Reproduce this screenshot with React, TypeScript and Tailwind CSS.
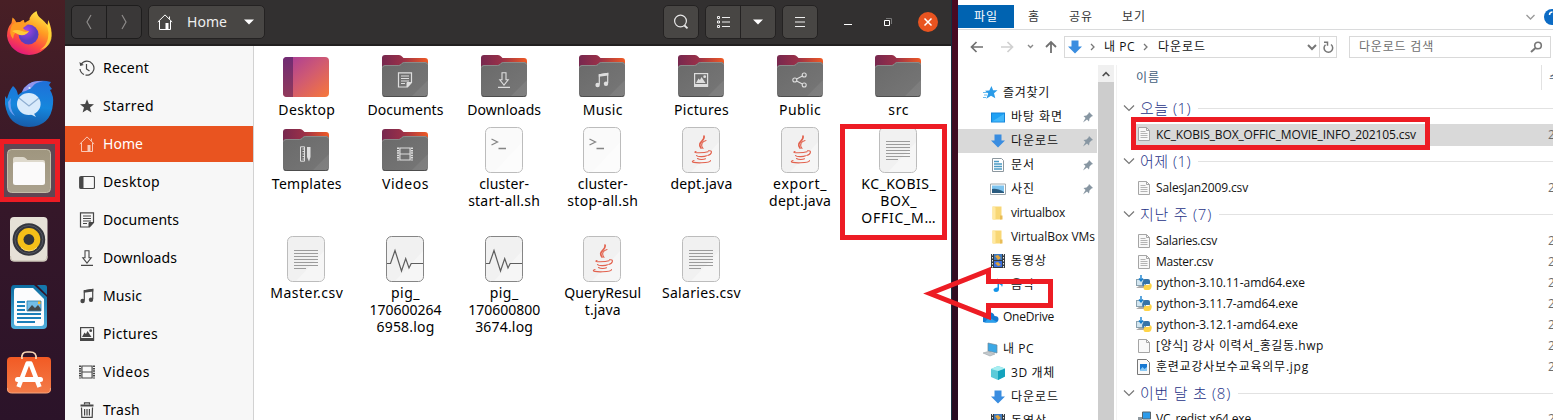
import { useLayoutEffect, useRef, useState } from "react";
import type { ReactNode } from "react";

/** A line of text whose tracking is adjusted so it spans `w` pixels. */
function Fit({ children, w, className = "" }: { children: string; w: number; className?: string }) {
  const ref = useRef<HTMLSpanElement>(null);
  const [spacing, setSpacing] = useState(0);
  useLayoutEffect(() => {
    if (ref.current) setSpacing((w - ref.current.getBoundingClientRect().width) / children.length);
  }, []);
  return (
    <span className={"block shrink-0 whitespace-pre " + className}>
      <span ref={ref} style={{ letterSpacing: spacing }}>{children}</span>
    </span>
  );
}

type GlyphName = "recent" | "star" | "home" | "desktop" | "doc" | "down" | "music" | "picture" | "video" | "trash" | "templates" | "share" | "none";

function Glyph({ name }: { name: GlyphName }) {
  const line = { fill: "none", stroke: "currentColor" };
  switch (name) {
    case "recent":
      return <g {...line} strokeWidth="1.2"><path d="M2.2 4.2A7 7 0 1 1 1 9" strokeDasharray="30 1.5" /><path d="M7.5 4v5l3 2" /><path d="M0.4 2l.8 4 3.6-1z" fill="currentColor" stroke="none" /></g>;
    case "star":
      return <path d="M8 1.2l1.9 4.900 5.100.2-4 3.200 1.400 4.900L8 11.700l-4.400 2.700L5 9.500 1 6.300l5.100-.2z" fill="currentColor" />;
    case "home":
      return <g {...line}><path d="M.8 8L8 .9 15.2 8M2.5 7v8.5h11V7M12.5 4.8V2.5" /><path d="M8.5 9h3v6h-3z" fill="currentColor" stroke="none" /></g>;
    case "desktop":
      return <g {...line}><rect x=".7" y="2.5" width="14.8" height="12" rx="1.3" strokeWidth="1.2" /><path d="M.8 3h3.7v11H.8z" fill="currentColor" stroke="none" /></g>;
    case "doc":
      return <g {...line}><path d="M1.5 .8h13v9.7l-4 4.5h-9z" strokeWidth="1.2" /><path d="M4 4h8M4 6.5h8M4 9h8M4 11.5h4" /><path d="M10 15v-4.5h4.5z" fill="currentColor" /></g>;
    case "down":
      return <g {...line} strokeWidth="1.1"><path d="M6 .8h4v7h2.2L8 13 3.8 7.800H6zM2 15.400h12" /></g>;
    case "music":
      return <g><path d="M5.300 12.500V2.800L13.700 1.500V11" {...line} strokeWidth="1.200" /><path d="M4.800 2.300L14.300.8v2.600L4.800 4.800z" fill="currentColor" /><circle cx="3.600" cy="13" r="2.200" fill="currentColor" /><circle cx="12" cy="11.700" r="2.200" fill="currentColor" /></g>;
    case "picture":
      return <g><rect x="1.600" y="1.600" width="13" height="12.500" {...line} strokeWidth="1.200" /><path d="M1 12h14v3H1zM3 11l2.500-4.500 1.500 1.500L8.500 5l4 6z" fill="currentColor" /><circle cx="11.700" cy="4.700" r="1.400" fill="currentColor" /></g>;
    case "video":
      return <g {...line}><path d="M1 1.500v13M15 1.500v13" strokeWidth="2" strokeDasharray="1.500 .9" /><path d="M2.900 2h10.200v12H2.900zM2.900 8h10.200" strokeWidth="1.200" /></g>;
    case "trash":
      return <g {...line}><path d="M2.500 5.500l.3 9.800h10.400l.3-9.800M5.600 7v6.500M8 7v6.500M10.400 7v6.500M5.500 2.500V.9h5v1.600" strokeWidth="1.200" /><path d="M1.500 2.500h13v2h-13z" fill="currentColor" stroke="none" /></g>;
    case "templates":
      return <g {...line}><path d="M2.500.8h4v14.400h-4zM4.500 3h2M4.500 5.500h2M4.500 8h2M4.500 10.500h2M4.500 13h2" /><path d="M9 1h3.500v10L11 15.500 9 11z" fill="currentColor" stroke="none" /></g>;
    case "share":
      return <g {...line} strokeWidth="1.100"><circle cx="2.800" cy="8" r="2" /><circle cx="12.200" cy="3" r="2" /><circle cx="12.200" cy="13" r="2" /><path d="M4.600 7l5.800-3M4.600 9l5.800 3" /></g>;
    default:
      return null;
  }
}

function SideIcon({ name }: { name: GlyphName }) {
  return <svg width="16" height="16" viewBox="0 0 16 16" className="shrink-0"><Glyph name={name} /></svg>;
}

function Folder({ name }: { name: GlyphName }) {
  return (
    <svg width="48" height="48" viewBox="0 0 48 48">
      <defs>
        <linearGradient id="folderBack" x1="0" y1="0" x2="1" y2="0">
          <stop offset="0" stopColor="#77284f" /><stop offset=".45" stopColor="#9a3048" /><stop offset="1" stopColor="#f05a24" />
        </linearGradient>
        <linearGradient id="folderFront" x1="0" y1="0" x2="1" y2="1">
          <stop offset="0" stopColor="#6a6a6a" /><stop offset="1" stopColor="#777" />
        </linearGradient>
      </defs>
      <path d="M1 6q0-3 3-3h14q2 0 3 1.500l1.500 1.500H44q3 0 3 3v20H1z" fill="url(#folderBack)" />
      <path d="M1 16q0-3 3-3h13.500q1.500 0 2.500-1l1.200-1.200Q22 10 23.500 10H44q3 0 3 3v28.500q0 3.500-3 3.500H4q-3 0-3-3.500z" fill="url(#folderFront)" />
      <path d="M1.500 15.500q.5-2 2.500-2h13.500q1.500 0 2.500-1l1.200-1.200q.8-.8 2.300-.8H44q2 0 2.500 2" fill="none" stroke="#929292" strokeWidth=".8" />
      <path d="M47 28v13.500q0 3.500-3 3.500H30z" fill="#fff" opacity=".07" />
      <path d="M2 43.500q1 1 2.500 1h39q1.500 0 2.500-1" fill="none" stroke="#4d4d4d" />
      <g transform="translate(16 20)" color="#dedede"><Glyph name={name} /></g>
    </svg>
  );
}

function DesktopTile() {
  return (
    <svg width="48" height="48" viewBox="0 0 48 48">
      <defs><linearGradient id="desk" x1="0" y1="0" x2="1" y2="1"><stop offset="0" stopColor="#a63a9b" /><stop offset=".5" stopColor="#d05a72" /><stop offset="1" stopColor="#f8783a" /></linearGradient>
        <linearGradient id="deskSide" x1="0" y1="0" x2="0" y2="1"><stop offset="0" stopColor="#702c73" /><stop offset="1" stopColor="#913a5c" /></linearGradient></defs>
      <rect x="1" y="5" width="46" height="40" rx="4" fill="url(#desk)" />
      <path d="M11 5H5q-4 0-4 4v32q0 4 4 4h6z" fill="url(#deskSide)" />
    </svg>
  );
}

type SheetKind = "text" | "shell" | "java" | "log";

function Sheet({ kind }: { kind: SheetKind }) {
  return (
    <svg width="48" height="48" viewBox="0 0 48 48">
      <rect x="5.500" y="1.500" width="37" height="45" rx="5" fill={kind === "shell" ? "#fafafa" : "#f1f1f1"} stroke={kind === "log" ? "#858585" : "#bcbcbc"} />
      <path d="M42 16v25.500q0 4.500-4.500 4.500H14z" fill="#fff" opacity=".35" />
      {kind === "text" && <path d="M12 15.500h24M12 18.500h24M12 21.500h24M12 24.500h24M12 27.500h24M12 30.500h24M12 33.500h12" stroke="#9c9c9c" />}
      {kind === "shell" && <g fill="none" stroke="#858585" strokeWidth="1.300"><path d="M11.500 13l6 3-6 3M18.500 22.500h7.500" /></g>}
      {kind === "log" && <path d="M6 28.500h3.500L14 15.500l6.500 20.500 4.200-12.500 3.300 9.500 2.200-4.500H42" fill="none" stroke="#5e5e5e" strokeWidth="1.200" />}
      {kind === "java" && (
        <g fill="none" stroke="#e2624e" strokeLinecap="round">
          <path d="M27 10c1.500 5-7.500 6-3 12" strokeWidth="1.700" />
          <path d="M29 14.500c-3.500 1-6 3.500-3 8" strokeWidth="1.100" />
          <path d="M19 25.500c-5 1.700 8 1.700 12 .2M19.500 29.500c1 1.500 8 1.500 10 .3M20.500 32.500c2 1.300 6 1.300 8 .3M31.500 24.800c4.500-.8 3.500 3.700-.8 4.700" strokeWidth="1.100" />
          <path d="M17 34.500c-5 1.700 2 2.500 7.500 2.300 6-.2 9-1 9-2.300" strokeWidth="1.100" />
        </g>
      )}
    </svg>
  );
}

type Tile = { icon: ReactNode; lines: [string, number][] };
const folder = (g: GlyphName, s: string, w: number): Tile => ({ icon: <Folder name={g} />, lines: [[s, w]] });
const sheet = (k: SheetKind, ...lines: [string, number][]): Tile => ({ icon: <Sheet kind={k} />, lines });

const rows: { h: string; tiles: Tile[] }[] = [
  { h: "h-[74px]", tiles: [
    { icon: <DesktopTile />, lines: [["Desktop", 57]] },
    folder("doc", "Documents", 76), folder("down", "Downloads", 74), folder("music", "Music", 40),
    folder("picture", "Pictures", 55), folder("share", "Public", 42), folder("none", "src", 21),
  ] },
  { h: "h-[109px]", tiles: [
    folder("templates", "Templates", 70), folder("video", "Videos", 47),
    sheet("shell", ["cluster-", 50], ["start-all.sh", 72]), sheet("shell", ["cluster-", 50], ["stop-all.sh", 71]),
    sheet("java", ["dept.java", 62]), sheet("java", ["export_", 54], ["dept.java", 62]),
    sheet("text", ["KC_KOBIS_", 75], ["BOX_", 37], ["OFFIC_M…", 75]),
  ] },
  { h: "h-[109px]", tiles: [
    sheet("text", ["Master.csv", 73]),
    sheet("log", ["pig_", 29], ["170600264", 72], ["6958.log", 58]),
    sheet("log", ["pig_", 29], ["170600800", 72], ["3674.log", 58]),
    sheet("java", ["QueryResul", 77], ["t.java", 36]),
    sheet("text", ["Salaries.csv", 79]),
  ] },
];

const places: [GlyphName, string, number][] = [
  ["recent", "Recent", 46], ["star", "Starred", 51], ["home", "Home", 40], ["desktop", "Desktop", 57],
  ["doc", "Documents", 76], ["down", "Downloads", 74], ["music", "Music", 39], ["picture", "Pictures", 55],
  ["video", "Videos", 47], ["trash", "Trash", 37],
];

function Dock() {
  return (
    <div className="flex h-[420px] w-[65px] shrink-0 flex-col bg-linear-to-b from-[#481f25] via-[#351729] to-[#2b1329] pt-[9px]">
      <svg width="65" height="50" viewBox="0 9 65 50">
        <defs>
          <linearGradient id="fox" x1=".8" y1="0" x2=".3" y2="1"><stop offset="0" stopColor="#fff04a" /><stop offset=".4" stopColor="#ff9b22" /><stop offset=".7" stopColor="#ff4a43" /><stop offset="1" stopColor="#df1580" /></linearGradient>
          <radialGradient id="globe" cx=".4" cy=".3"><stop offset="0" stopColor="#a845e8" /><stop offset="1" stopColor="#5b3ec0" /></radialGradient>
        </defs>
        <path d="M12.500 17.500q2 1 4 5l5 -.5 2-2 1 3q3-2 5-3 0-5 7-9 1 6 6 9l5 5 .8-5q4 9 3 16a22.300 21.500 0 0 1-44.300 0q0-8 4.500-13z" fill="url(#fox)" />
        <path d="M36 11q2 7 7 10 7 6 5 17-1 7-8 12 13-4 11.500-17l-3-12-1 5q-3-5-7-8-4-3-4.500-7z" fill="#ffe13b" opacity=".75" />
        <circle cx="28.500" cy="34.500" r="10" fill="url(#globe)" />
        <path d="M12 25q3-3 8-3 2-2 4-2 0 4 3 5l-4 3q2 3 6 3-2 4-8 4-4 0-5-3-3 3-3 7-5-6-1-14z" fill="#ff9b22" />
        <path d="M12 31q5-2 10 0 4 2 7 0-3 5-9 4-5-2-8-4z" fill="#ffcb3a" />
      </svg>
      <svg width="65" height="52" viewBox="0 77 65 52" className="mt-[18px]">
        <defs><linearGradient id="bird" x1=".5" y1="0" x2=".4" y2="1"><stop offset="0" stopColor="#1f70d8" /><stop offset=".55" stopColor="#1587dd" /><stop offset="1" stopColor="#185ba9" /></linearGradient></defs>
        <path d="M13 86q4 3 5 9l4-3q4-10 16-11 6-1 13 1l-2 3 3 4-2 1q4 6 3 14-2 22-24 23Q8 126 5 104V96l2 3q2-8 6-13z" fill="url(#bird)" />
        <path d="M22 92q4-10 16-11l8 1q-9-1-13 4-3 4-11 6z" fill="#9295eb" />
        <path d="M11 98q-2 11 4 18-7-4-7-14z" fill="#6f9ef0" />
        <circle cx="29.500" cy="88" r="1.100" fill="#d7f1ff" />
        <ellipse cx="28.800" cy="104" rx="11.800" ry="11" fill="#d8eafb" />
        <path d="M28 113l8 4-3-5z" fill="#d8eafb" />
        <path d="M19 98l10 8 10-8" fill="none" stroke="#8eaed1" strokeWidth="1.200" />
      </svg>
      <svg width="65" height="64" viewBox="0 138 65 64" className="mt-[9px]">
        <defs><linearGradient id="filesTile" x1="0" y1="0" x2="0" y2="1"><stop offset="0" stopColor="#9f967f" /><stop offset="1" stopColor="#aaa18d" /></linearGradient></defs>
        <rect x="0" y="139" width="60" height="63" rx="3" fill="#604653" />
        <rect x="7.500" y="149.500" width="43" height="43" rx="4" fill="url(#filesTile)" stroke="#c4bda9" />
        <path d="M13 159q0-2 2-2h8q2 0 3 1.500l1.500 1.500H43q2 0 2 2v10H13z" fill="#ded9cc" />
        <rect x="13" y="162" width="32" height="23" rx="2.500" fill="#fbfafa" />
      </svg>
      <svg width="65" height="50" viewBox="0 214 65 50" className="mt-[12px]">
        <rect x="10" y="217" width="37.500" height="44.500" rx="4" fill="#e6e1d7" />
        <path d="M10.500 256q0 5 4 5h28.500q4 0 4-5" fill="none" stroke="#c4bcad" />
        <circle cx="28.900" cy="239.500" r="16.300" fill="#34363d" /><circle cx="28.900" cy="239.500" r="14" fill="none" stroke="#555763" />
        <circle cx="28.900" cy="239.500" r="11.400" fill="#f4bf19" /><path d="M21 247.500a11 11 0 0 0 16 0" fill="none" stroke="#ffdf73" />
        <circle cx="28.900" cy="239.500" r="5.400" fill="#33363a" />
      </svg>
      <svg width="65" height="50" viewBox="0 281 65 50" className="mt-[17px]">
        <defs><linearGradient id="writer" x1="0" y1="0" x2="0" y2="1"><stop offset="0" stopColor="#0c6da1" /><stop offset="1" stopColor="#4eafdc" /></linearGradient></defs>
        <path d="M14 285h20l13 12v28q0 4-4 4H15q-4 0-4-4v-36q0-4 3-4z" fill="url(#writer)" />
        <path d="M37 285h8q2 0 2 2v8z" fill="#1577ac" />
        <path d="M16 288h17l11 11v24q0 3-3 3H17q-3 0-3-3v-32q0-3 2-3z" fill="#fbfcfd" />
        <path d="M17 302h8M17 306h8M17 310h8M17 314h24M17 318h24M17 322h18" stroke="#1a7fb9" strokeWidth="1.800" />
        <path d="M27 301h14v10H27z" fill="#72bce7" /><path d="M27 311l5-6 3 3 3-3 3 4v2z" fill="#46494c" /><path d="M38 301h3v3h-3z" fill="#fdbc35" /><path d="M27 301h14v10H27z" fill="none" stroke="#287eaf" strokeWidth=".8" />
      </svg>
      <svg width="65" height="50" viewBox="0 348 65 50" className="mt-[17px]">
        <defs><linearGradient id="store" x1="0" y1="0" x2="0" y2="1"><stop offset="0" stopColor="#f25a24" /><stop offset="1" stopColor="#f37b48" /></linearGradient></defs>
        <rect x="7" y="357" width="44" height="36" rx="4" fill="url(#store)" />
        <path d="M7.500 388q0 5 4 5h35q4 0 4-5" fill="none" stroke="#f7a47d" />
        <path d="M22 359q-1-7 5-7h3q7 0 6 7" fill="none" stroke="#fbd7b5" strokeWidth="1.700" />
        <path d="M18.500 387L27.500 363.500h3L39.500 387" fill="none" stroke="#fff" strokeWidth="4.500" strokeLinejoin="round" />
        <rect x="15" y="377" width="28" height="5" rx="2.500" fill="#fff" />
      </svg>
    </div>
  );
}

function UbuntuHeader() {
  return (
    <div className="flex h-[46px] w-full shrink-0 items-start border-b-2 border-[#222020] bg-[#323030] pt-[5px] text-white">
      <div className="ml-[6px] flex h-[34px] w-[71px] shrink-0 rounded-[5px] border border-[#1e1d1d] bg-[#3a3838]">
        <div className="flex flex-1 items-center justify-center border-r border-[#1e1d1d]"><svg width="6" height="16" viewBox="0 0 6 16"><path d="M5 1L1 8l4 7" fill="none" stroke="#8d8b8a" strokeWidth="1.200" /></svg></div>
        <div className="flex flex-1 items-center justify-center"><svg width="6" height="16" viewBox="0 0 6 16"><path d="M1 1l4 7-4 7" fill="none" stroke="#8d8b8a" strokeWidth="1.200" /></svg></div>
      </div>
      <div className="ml-[6px] flex h-[34px] w-[117px] shrink-0 items-center rounded-[5px] border border-[#242222] bg-[#484644] pl-[8px]">
        <SideIcon name="home" />
        <Fit w={40} className="ml-[14px] text-[14px] leading-[32px] text-[#eee]">Home</Fit>
        <svg width="10" height="6" viewBox="0 0 10 6" className="ml-[17px]"><path d="M0 .5h10L5 5.500z" fill="#fff" /></svg>
      </div>
      <div className="ml-[398px] flex h-[34px] w-[36px] shrink-0 items-center justify-center rounded-[5px] border border-[#242222] bg-[#484644]">
        <svg width="16" height="16" viewBox="0 0 16 16" fill="none" stroke="#e8e8e8" strokeWidth="1.200"><circle cx="7.500" cy="7" r="5.900" /><path d="M11.500 11.500l3 2.800" strokeWidth="1.800" /></svg>
      </div>
      <div className="ml-[6px] flex h-[34px] w-[71px] shrink-0 rounded-[5px] border border-[#242222] bg-[#484644]">
        <div className="flex w-[35px] items-center justify-center border-r border-[#242222]">
          <svg width="13" height="12" viewBox="0 0 13 12" fill="none" stroke="#eee"><path d="M5 1.500h8M5 6h8M5 10.500h8" /><path d="M.5.500h2v2h-2zM.5 5h2v2h-2zM.5 9.500h2v2h-2z" /></svg>
        </div>
        <div className="flex flex-1 items-center justify-center"><svg width="10" height="6" viewBox="0 0 10 6"><path d="M0 .5h10L5 5.500z" fill="#fff" /></svg></div>
      </div>
      <div className="ml-[6px] flex h-[34px] w-[36px] shrink-0 items-center justify-center rounded-[5px] border border-[#242222] bg-[#484644]">
        <svg width="10" height="10" viewBox="0 0 10 10"><path d="M0 .5h10M0 5h10M0 9.500h10" stroke="#eee" /></svg>
      </div>
      <svg width="100" height="34" viewBox="840 5 100 34" className="ml-[22px] shrink-0">
        <path d="M844 24.500h8" stroke="#fff" />
        <path d="M884.500 20.500h5v5h-5z" fill="none" stroke="#fff" /><path d="M886 18.500h5.500v5.500" fill="none" stroke="#777" />
        <circle cx="928" cy="22" r="10" fill="#e95420" /><path d="M924.500 18.500l7 7M931.500 18.500l-7 7" stroke="#fff" strokeWidth="1.500" />
      </svg>
    </div>
  );
}

function UbuntuWindow() {
  return (
    <div className="relative flex h-[420px] w-[886px] shrink-0 flex-col overflow-hidden bg-white font-['Noto_Sans',sans-serif] text-black">
      <UbuntuHeader />
      <div className="flex h-[374px]">
        <div className="flex h-full w-[189px] shrink-0 flex-col gap-[2px] overflow-hidden border-r border-[#d2d2d2] bg-[#f7f7f7] pt-[4px]">
          {places.map(([g, s, w]) => (
            <div key={s} className={"flex h-[36px] shrink-0 items-center pl-[14px] " + (s === "Home" ? "bg-[#e95420] text-white" : "")}>
              <span className={s === "Home" ? "text-[#f9c9b8]" : "text-[#474747]"}><SideIcon name={g} /></span>
              <Fit w={w} className="ml-[8px] text-[14px] leading-[36px]">{s}</Fit>
            </div>
          ))}
        </div>
        <div className="flex flex-col pt-[6px] pl-[3px]">
          {rows.map((r, i) => (
            <div key={i} className={"flex " + r.h}>
              {r.tiles.map((t, j) => (
                <div key={j} className="flex w-[98.67px] flex-col items-center">
                  <div className="mb-px h-[48px]">{t.icon}</div>
                  {t.lines.map(([s, w]) => <Fit key={s} w={w} className="pl-px text-[14px] leading-[17px]">{s}</Fit>)}
                </div>
              ))}
            </div>
          ))}
        </div>
      </div>
    </div>
  );
}

type WinIcon = "quick" | "screen" | "down" | "docs" | "photos" | "folder" | "film" | "note" | "cloud" | "pc" | "cube" | "text" | "python" | "blank" | "jpg" | "setup";

function Win({ name }: { name: WinIcon }) {
  const art: Record<WinIcon, ReactNode> = {
    quick: <g><path d="M8.500 1l1.600 4.200 4.400.1-3.500 3 1.300 5L8 10.800l-4.700 3 1.900-5.300L2 5.700l4.300-.3z" fill="#2a9be8" /><path d="M0 7.500h4M1 10h3M0 12.500h3" stroke="#68b9ed" /></g>,
    screen: <g><path d="M1 3.500h14v10H1z" fill="#1684d8" /><path d="M2 4.500h12v8H2z" fill="#1fa1f4" /><path d="M2 12.500L14 5v7.500z" fill="#42b7fa" /></g>,
    down: <path d="M4.500 1.500h7v6H15l-7 7-7-7h3.500z" fill="#3a8de0" />,
    docs: <g><path d="M2.500 1.500h9l2 2v11h-11z" fill="#fff" stroke="#8c979e" /><path d="M4 4.500h5M4 7h8M4 9.500h8M4 12h8" stroke="#4b9bc4" strokeWidth="1.300" /></g>,
    photos: <g><path d="M.5 3h15v10.500H.5z" fill="#fff" stroke="#a0a8ac" /><path d="M2 4.500h12V12H2z" fill="#7ec4ef" /><path d="M2 8q5-1 12 3v1H2z" fill="#2a5b7f" /></g>,
    folder: <g><path d="M2.500 1.500h9v13h-9z" fill="#f8d775" /><path d="M2.500 1.500l3 1v12.500l-3-1z" fill="#ffe9a2" /><path d="M10 10.500h2.500v4H10z" fill="#e8bc57" /></g>,
    film: <g><path d="M1 1h14v14H1z" fill="#343b40" /><path d="M4 1h8v6H4z" fill="#3f7abf" /><path d="M4 8h8v6H4z" fill="#3a6fe0" /><path d="M5 3l3-1 3 3-3 2zM5 10l3-1 3 3-3 1z" fill="#e0a23b" /><path d="M2.500 1v14M13.500 1v14" stroke="#eee" strokeDasharray="1.500 1.500" /></g>,
    note: <path d="M7.500 1q1 3 4 4.500 2 1.500.5 4.500 0-2-3-3V12q0 3-3 3-2.500 0-2.500-2t4-2.500z" fill="#1294e8" />,
    cloud: <g transform="translate(-2 0)"><path d="M4 13.500Q0 13 1 9.500 2 7 5 7q1-4 5-3.500 3 .5 3.500 3.500 4 0 4 3t-3 3.500z" fill="#1578cf" /><path d="M4 13.500q1-3 5-4.500l7 4q-1 .5-2 .5z" fill="#29a1ee" /></g>,
    pc: <g><path d="M5 2l9 2v8l-9-2z" fill="#3ba8e6" stroke="#6e8796" strokeWidth=".7" /><path d="M0 12l5-1.500 7 2.500-5 2z" fill="#c3c9cd" stroke="#90989d" strokeWidth=".5" /></g>,
    cube: <g><path d="M1 4l7-3 7 2.500v8L8 15l-7-3z" fill="#5ccbd9" /><path d="M8 6l7-2.500v8L8 15z" fill="#14a3bd" /><path d="M1 4l7-3 7 2.500L8 6z" fill="#a8eef1" /></g>,
    text: <g><path d="M2.500 1.500h8l3 3v10h-11z" fill="#f8f8f8" stroke="#a5a5a5" /><path d="M10.500 1.500v3h3" fill="none" stroke="#a5a5a5" /><path d="M4.500 5.500h5M4.500 7.500h7M4.500 9.500h7M4.500 11.500h7" stroke="#b4b4b4" /></g>,
    python: <g><path d="M0 4h10v7H0z" fill="#8aa1ae" /><path d="M1 5h8v5H1z" fill="#d3e5ef" /><path d="M0 13l3-2h6v2z" fill="#aaa" /><path d="M5 0v5M3 3.500l2 2.500 2-2.500" stroke="#1780ce" fill="none" strokeWidth="1.400" /><path d="M7 6q0-2 2.500-2H12q2 0 2 2v3H9q-1.500 0-1.500 3Q5 9 7 6z" fill="#3774a7" /><path d="M14 8q2.500 1 1.500 4-.5 3-3 3h-3q-2 0-2-2 0-3 2-3h3q1.500 0 1.500-2z" fill="#ffd447" /></g>,
    blank: <g><path d="M2.500 1.500h8l3 3v10h-11z" fill="#f9f9f9" stroke="#a5a5a5" /><path d="M10.500 1.500v3h3" fill="none" stroke="#a5a5a5" /></g>,
    jpg: <g><path d="M1.500.500h9l3 3v12h-12z" fill="#f9f9f9" stroke="#777" /><path d="M4 5h7v7H4z" fill="#1678d2" /><path d="M4 11l2.500-3 2 2L11 8v4H4z" fill="#89c8f4" /></g>,
    setup: <g><path d="M6.500 1h8v7h-8z" fill="#2d9bea" stroke="#59656c" /><path d="M0 9h15v6H0z" fill="#444c53" /><path d="M2 6h4v3H2z" fill="#909aa1" /></g>,
  };
  return <svg width="16" height="16" viewBox="0 0 16 16" className="shrink-0">{art[name]}</svg>;
}

type NavRow = { icon: WinIcon; label: string; w: number; pin?: boolean; root?: boolean; cls?: string };
const nav: NavRow[] = [
  { icon: "quick", label: "즐겨찾기", w: 47, root: true },
  { icon: "screen", label: "바탕 화면", w: 52, pin: true },
  { icon: "down", label: "다운로드", w: 48, pin: true, cls: "bg-[#d9d9d9]" },
  { icon: "docs", label: "문서", w: 24, pin: true },
  { icon: "photos", label: "사진", w: 24, pin: true },
  { icon: "folder", label: "virtualbox", w: 54 },
  { icon: "folder", label: "VirtualBox VMs", w: 84 },
  { icon: "film", label: "동영상", w: 36 },
  { icon: "note", label: "음악", w: 24 },
  { icon: "cloud", label: "OneDrive", w: 51, root: true, cls: "mt-[8px]" },
  { icon: "pc", label: "내 PC", w: 31, root: true, cls: "mt-[8px]" },
  { icon: "cube", label: "3D 개체", w: 44 },
  { icon: "down", label: "다운로드", w: 48 },
  { icon: "film", label: "동영상", w: 36 },
];

function NavItem({ row }: { row: NavRow }) {
  return (
    <div className={"flex h-[24px] shrink-0 items-center " + (row.root ? "pl-[25px] " : "pl-[32px] ") + (row.cls ?? "")}>
      <Win name={row.icon} />
      <Fit w={row.w} className={(row.root ? "ml-[4px]" : "ml-[5px]") + " text-[12px] leading-[24px]"}>{row.label}</Fit>
      {row.pin && <svg width="12" height="12" viewBox="0 0 12 12" className="mr-[3px] ml-auto"><path d="M7 1l4 4-1.500.5-2 2-.5 3L5 8.500 1 11.500 3.500 7 1.500 5l3-.5 2-2z" fill="#8796a2" /></svg>}
    </div>
  );
}

function Group({ label, w, cls = "" }: { label: string; w: number; cls?: string }) {
  return (
    <div className={"flex h-[24px] shrink-0 items-center pl-[6px] " + cls}>
      <svg width="12" height="8" viewBox="0 0 12 8"><path d="M1 1.500l5 5 5-5" fill="none" stroke="#777" strokeWidth="1.200" /></svg>
      <Fit w={w} className="ml-[5px] text-[15px] leading-[24px] font-light text-[#1e3287]">{label}</Fit>
      <div className="ml-[7px] h-px flex-1 bg-[#e2e2e2]" />
    </div>
  );
}

function FileRow({ icon, label, w, cls = "" }: { icon: WinIcon; label: string; w: number; cls?: string }) {
  return (
    <div className={"ml-[16px] flex h-[21px] shrink-0 items-center overflow-hidden pl-[3px] " + cls}>
      <Win name={icon} />
      <Fit w={w} className="ml-[4px] text-[12px] leading-[21px]">{label}</Fit>
      <span className="ml-auto w-[5px] shrink-0 overflow-hidden text-[12px] leading-[21px] text-[#6d6d6d]">2</span>
    </div>
  );
}

function Explorer() {
  return (
    <div className="flex h-[420px] w-[595px] shrink-0 flex-col overflow-hidden bg-white font-['Open_Sans','Noto_Sans_CJK_KR',sans-serif] text-[12px] text-[#111]">
      <div className="flex h-[30px] shrink-0 items-start border-b border-[#dadbdc] pt-[5px] leading-[23px] text-[#333]">
        <div className="flex h-[23px] w-[56px] justify-center bg-[#0063b1] text-white"><Fit w={24}>파일</Fit></div>
        <Fit w={12} className="ml-[14px]">홈</Fit>
        <Fit w={24} className="ml-[29px]">공유</Fit>
        <Fit w={24} className="ml-[29px]">보기</Fit>
        <svg width="28" height="23" viewBox="1525 5 28 23" className="ml-auto"><path d="M1526.500 15l4 4 4-4" fill="none" stroke="#999" strokeWidth="1.300" /><circle cx="1552" cy="17" r="8" fill="#0c6bc4" /><path d="M1549.500 15q0-3 3-3" fill="none" stroke="#fff" strokeWidth="1.500" /></svg>
      </div>
      <div className="flex h-[35px] shrink-0 items-start pt-[6px]">
        <svg width="106" height="22" viewBox="958 36 106 22" fill="none">
          <path d="M983 47h-11M976.500 42l-5 5 5 5" stroke="#707070" strokeWidth="1.700" />
          <path d="M1001 47h11M1007.500 42l5 5-5 5" stroke="#d0d0d0" strokeWidth="1.700" />
          <path d="M1028 45l2.500 2.500 2.500-2.500" stroke="#888" strokeWidth="1.400" />
          <path d="M1051 53V42M1046 47l5-5 5 5" stroke="#707070" strokeWidth="1.800" />
        </svg>
        <div className="flex h-[22px] w-[273px] items-center border border-[#d9d9d9] pl-[2px]">
          <Win name="down" />
          <svg width="5" height="8" viewBox="0 0 5 8" className="ml-[7px]"><path d="M1 1l3 3-3 3" fill="none" stroke="#777" strokeWidth="1.300" /></svg>
          <Fit w={31} className="ml-[9px] leading-[20px]">내 PC</Fit>
          <svg width="5" height="8" viewBox="0 0 5 8" className="ml-[8px]"><path d="M1 1l3 3-3 3" fill="none" stroke="#777" strokeWidth="1.300" /></svg>
          <Fit w={48} className="ml-[10px] leading-[20px]">다운로드</Fit>
          <svg width="10" height="7" viewBox="0 0 10 7" className="mr-[2px] ml-auto"><path d="M1 1l4 4 4-4" fill="none" stroke="#777" strokeWidth="2" /></svg>
          <div className="flex h-full w-[17px] items-center justify-center border-l border-[#d9d9d9]">
            <svg width="12" height="12" viewBox="0 0 12 12" fill="none" stroke="#777" strokeWidth="1.500"><path d="M9 3.500a4.300 4.300 0 1 1-5.500.2M2 1.200h3.500v3.500" /></svg>
          </div>
        </div>
        <div className="ml-[12px] flex h-[22px] w-[202px] items-center border border-[#d9d9d9] pl-[9px] text-[#6d6d6d]">
          <Fit w={75} className="leading-[20px]">다운로드 검색</Fit>
          <svg width="13" height="12" viewBox="0 0 13 12" className="mr-[7px] ml-auto" fill="none" stroke="#777"><circle cx="8" cy="4.500" r="3.300" strokeWidth="1.600" /><path d="M5.500 7L1 11" strokeWidth="2" /></svg>
        </div>
      </div>
      <div className="flex h-[355px]">
        <div className="flex w-[139px] shrink-0 flex-col overflow-hidden pt-[16px]">
          {nav.map((r, i) => <NavItem key={i} row={r} />)}
        </div>
        <div className="ml-px h-full w-[16px] shrink-0 bg-[#cdcdcd]">
          <div className="flex h-[17px] items-center justify-center bg-[#f0f0f0]"><svg width="8" height="6" viewBox="0 0 8 6"><path d="M.7 5L4 1.700 7.300 5" fill="none" stroke="#505050" strokeWidth="1.700" /></svg></div>
        </div>
        <div className="ml-[2px] flex min-w-0 flex-1 flex-col border-l border-[#f2f2f2]">
          <div className="flex h-[25px] shrink-0 items-center pl-[19px] leading-[25px] text-[#43607c]">
            <Fit w={24}>이름</Fit>
            <div className="ml-auto h-full w-[12px] overflow-hidden border-l border-[#e2e2e2] pl-[7px]">수</div>
          </div>
          <Group label="오늘 (1)" w={51} cls="mt-[6px]" />
          <FileRow icon="text" label="KC_KOBIS_BOX_OFFIC_MOVIE_INFO_202105.csv" w={260} cls="mt-[4px] h-[22px] -mb-px bg-[#d9d9d9] pb-[2px]" />
          <Group label="어제 (1)" w={51} cls="mt-[4px]" />
          <FileRow icon="text" label="SalesJan2009.csv" w={92} cls="mt-[4px]" />
          <Group label="지난 주 (7)" w={72} cls="mt-[4px]" />
          <FileRow icon="text" label="Salaries.csv" w={61} cls="mt-[4px]" />
          <FileRow icon="text" label="Master.csv" w={57} />
          <FileRow icon="python" label="python-3.10.11-amd64.exe" w={149} />
          <FileRow icon="python" label="python-3.11.7-amd64.exe" w={142} />
          <FileRow icon="python" label="python-3.12.1-amd64.exe" w={142} />
          <FileRow icon="blank" label="[양식] 강사 이력서_홍길동.hwp" w={168} />
          <FileRow icon="jpg" label="훈련교강사보수교육의무.jpg" w={153} />
          <Group label="이번 달 초 (8)" w={91} cls="mt-[4px]" />
          <FileRow icon="setup" label="VC_redist.x64.exe" w={95} cls="mt-[3px]" />
        </div>
      </div>
    </div>
  );
}

export default function App() {
  return (
    <div className="relative flex h-[420px] w-[1553px] overflow-hidden bg-white">
      <Dock />
      <UbuntuWindow />
      <div className="h-full w-[7px] shrink-0 border-l border-[#14303f] bg-linear-to-b from-[#4a0a22] to-[#260a20]" />
      <Explorer />
      <div className="absolute top-[139px] left-0 h-[63px] w-[60px] border-5 border-l-4 border-[#ed1c24]" />
      <div className="absolute top-[124px] left-[840px] h-[116px] w-[107px] border-5 border-[#ed1c24]" />
      <div className="absolute top-[117px] left-[1131px] h-[33px] w-[299px] border-5 border-[#ed1c24]" />
      <svg className="absolute top-[260px] left-[915px]" width="145" height="70" viewBox="915 260 145 70">
        <path d="M930 293.500L988.500 270.500v11h62v24h-62V316.500z" fill="none" stroke="#ed1c24" strokeWidth="5" />
      </svg>
    </div>
  );
}
